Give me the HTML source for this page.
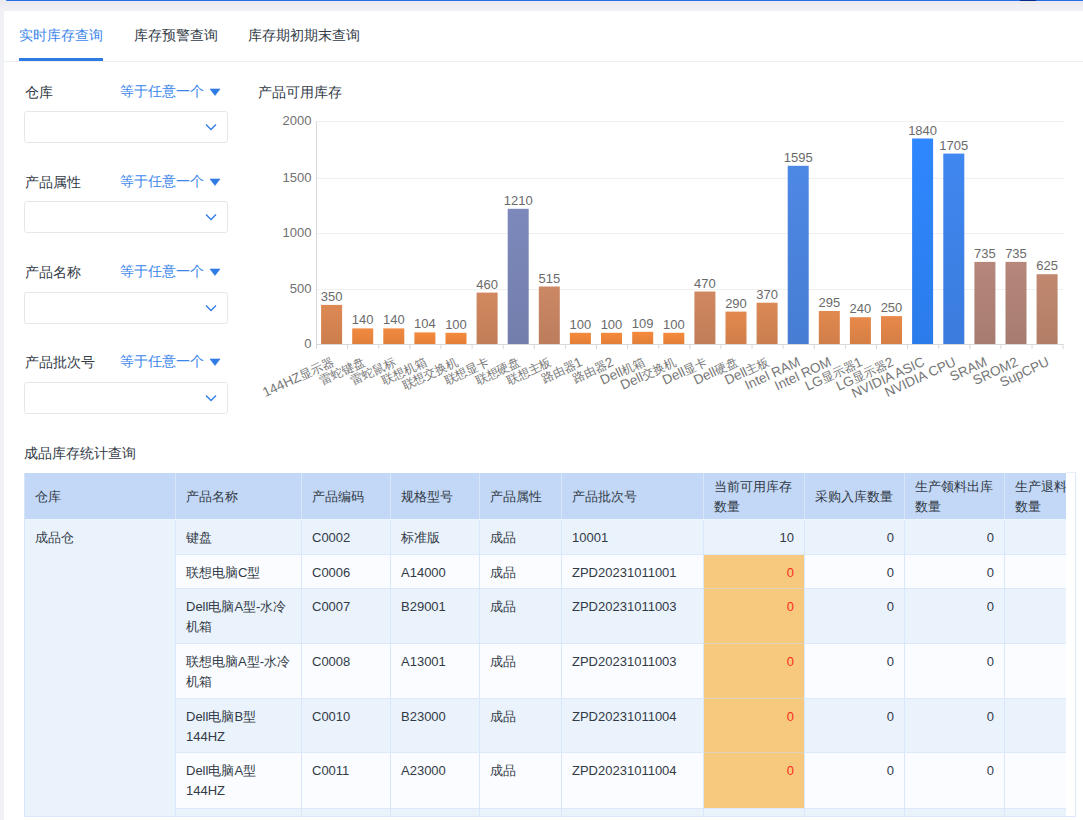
<!DOCTYPE html>
<html><head><meta charset="utf-8"><style>
html,body{margin:0;padding:0}
body{width:1083px;height:820px;overflow:hidden;position:relative;background:#f0f1f5;font-family:"Liberation Sans",sans-serif;}
.abs{position:absolute}
.tab{position:absolute;top:25px;font-size:14px;line-height:20px;color:#323a46;white-space:nowrap}
.lab{position:absolute;left:25px;font-size:14px;line-height:20px;color:#323a46;white-space:nowrap}
.op{position:absolute;left:120px;font-size:14px;line-height:20px;color:#3b86ea;white-space:nowrap}
.tri{position:absolute;left:209px}
.sel{position:absolute;left:24px;width:202px;height:30px;border:1px solid #e6e7ea;border-radius:3px;background:#fff}
.yl{font-size:13px;fill:#707070;font-family:"Liberation Sans",sans-serif}
.vl{font-size:13px;fill:#6a6a6a;font-family:"Liberation Sans",sans-serif}
.cj{font-size:12px}
.xl{font-size:13.5px;fill:#767676;font-family:"Liberation Sans",sans-serif}
.th{position:absolute;font-size:13px;line-height:20px;color:#323a46;white-space:nowrap}
.th2{position:absolute;font-size:13px;line-height:20px;color:#323a46;white-space:nowrap;overflow:hidden}
.td{position:absolute;font-size:13px;line-height:20px;color:#323a46;white-space:nowrap}
.num{text-align:right}
.red{color:#fb2c17}
</style></head><body>
<div class="abs" style="left:0;top:0;width:1083px;height:11px;background:linear-gradient(#e9e9ee,#f2f2f6)"></div>
<div class="abs" style="left:6px;top:0;width:1077px;height:1px;background:#2570e8;border-radius:0 0 0 2px"></div>
<div class="abs" style="left:1020px;top:0;width:16px;height:1px;background:#0a2a8a"></div>
<div class="abs" style="left:0;top:11px;width:4px;height:809px;background:#f0f1f5"></div>
<div class="abs" style="left:4px;top:11px;width:1079px;height:809px;background:#fff"></div>
<div class="tab" style="left:19px;color:#3b86ea">实时库存查询</div>
<div class="tab" style="left:134px">库存预警查询</div>
<div class="tab" style="left:248px">库存期初期末查询</div>
<div class="abs" style="left:4px;top:61px;width:1079px;height:1px;background:#eeeff3"></div>
<div class="abs" style="left:19px;top:58px;width:84px;height:3px;background:#2f7be6"></div>
<div class="lab" style="top:82px">仓库</div>
<div class="op" style="top:81px">等于任意一个</div><svg class="tri" style="top:88px" width="12" height="9"><path d="M1 1 L11 1 L6 7.5 Z" fill="#2f7be6" stroke="#2f7be6" stroke-width="0.6" stroke-linejoin="round"/></svg>
<div class="sel" style="top:111px"><svg width="12" height="8" style="position:absolute;left:180px;top:11px"><path d="M1 1.5 L6 6.5 L11 1.5" fill="none" stroke="#2f7be6" stroke-width="1.3"/></svg></div>
<div class="lab" style="top:172px">产品属性</div>
<div class="op" style="top:171px">等于任意一个</div><svg class="tri" style="top:178px" width="12" height="9"><path d="M1 1 L11 1 L6 7.5 Z" fill="#2f7be6" stroke="#2f7be6" stroke-width="0.6" stroke-linejoin="round"/></svg>
<div class="sel" style="top:201px"><svg width="12" height="8" style="position:absolute;left:180px;top:11px"><path d="M1 1.5 L6 6.5 L11 1.5" fill="none" stroke="#2f7be6" stroke-width="1.3"/></svg></div>
<div class="lab" style="top:262px">产品名称</div>
<div class="op" style="top:261px">等于任意一个</div><svg class="tri" style="top:268px" width="12" height="9"><path d="M1 1 L11 1 L6 7.5 Z" fill="#2f7be6" stroke="#2f7be6" stroke-width="0.6" stroke-linejoin="round"/></svg>
<div class="sel" style="top:292px"><svg width="12" height="8" style="position:absolute;left:180px;top:11px"><path d="M1 1.5 L6 6.5 L11 1.5" fill="none" stroke="#2f7be6" stroke-width="1.3"/></svg></div>
<div class="lab" style="top:352px">产品批次号</div>
<div class="op" style="top:351px">等于任意一个</div><svg class="tri" style="top:358px" width="12" height="9"><path d="M1 1 L11 1 L6 7.5 Z" fill="#2f7be6" stroke="#2f7be6" stroke-width="0.6" stroke-linejoin="round"/></svg>
<div class="sel" style="top:382px"><svg width="12" height="8" style="position:absolute;left:180px;top:11px"><path d="M1 1.5 L6 6.5 L11 1.5" fill="none" stroke="#2f7be6" stroke-width="1.3"/></svg></div>
<div class="lab" style="left:258px;top:82px">产品可用库存</div>
<svg width="1083" height="820" style="position:absolute;left:0;top:0">
<defs><linearGradient id="g0" x1="0" y1="0" x2="0" y2="1"><stop offset="0" stop-color="#dd8954"/><stop offset="1" stop-color="#cb7e4d"/></linearGradient><linearGradient id="g1" x1="0" y1="0" x2="0" y2="1"><stop offset="0" stop-color="#f28a40"/><stop offset="1" stop-color="#df7f3b"/></linearGradient><linearGradient id="g2" x1="0" y1="0" x2="0" y2="1"><stop offset="0" stop-color="#f28a40"/><stop offset="1" stop-color="#df7f3b"/></linearGradient><linearGradient id="g3" x1="0" y1="0" x2="0" y2="1"><stop offset="0" stop-color="#f68a3c"/><stop offset="1" stop-color="#e27f37"/></linearGradient><linearGradient id="g4" x1="0" y1="0" x2="0" y2="1"><stop offset="0" stop-color="#f68a3c"/><stop offset="1" stop-color="#e27f37"/></linearGradient><linearGradient id="g5" x1="0" y1="0" x2="0" y2="1"><stop offset="0" stop-color="#d2885f"/><stop offset="1" stop-color="#c17d57"/></linearGradient><linearGradient id="g6" x1="0" y1="0" x2="0" y2="1"><stop offset="0" stop-color="#7d89bb"/><stop offset="1" stop-color="#737eac"/></linearGradient><linearGradient id="g7" x1="0" y1="0" x2="0" y2="1"><stop offset="0" stop-color="#cc8865"/><stop offset="1" stop-color="#bc7d5d"/></linearGradient><linearGradient id="g8" x1="0" y1="0" x2="0" y2="1"><stop offset="0" stop-color="#f68a3c"/><stop offset="1" stop-color="#e27f37"/></linearGradient><linearGradient id="g9" x1="0" y1="0" x2="0" y2="1"><stop offset="0" stop-color="#f68a3c"/><stop offset="1" stop-color="#e27f37"/></linearGradient><linearGradient id="g10" x1="0" y1="0" x2="0" y2="1"><stop offset="0" stop-color="#f58a3d"/><stop offset="1" stop-color="#e17f38"/></linearGradient><linearGradient id="g11" x1="0" y1="0" x2="0" y2="1"><stop offset="0" stop-color="#f68a3c"/><stop offset="1" stop-color="#e27f37"/></linearGradient><linearGradient id="g12" x1="0" y1="0" x2="0" y2="1"><stop offset="0" stop-color="#d18860"/><stop offset="1" stop-color="#c07d58"/></linearGradient><linearGradient id="g13" x1="0" y1="0" x2="0" y2="1"><stop offset="0" stop-color="#e3894f"/><stop offset="1" stop-color="#d17e49"/></linearGradient><linearGradient id="g14" x1="0" y1="0" x2="0" y2="1"><stop offset="0" stop-color="#db8956"/><stop offset="1" stop-color="#c97e4f"/></linearGradient><linearGradient id="g15" x1="0" y1="0" x2="0" y2="1"><stop offset="0" stop-color="#4d88e5"/><stop offset="1" stop-color="#477dd3"/></linearGradient><linearGradient id="g16" x1="0" y1="0" x2="0" y2="1"><stop offset="0" stop-color="#e2894f"/><stop offset="1" stop-color="#d07e49"/></linearGradient><linearGradient id="g17" x1="0" y1="0" x2="0" y2="1"><stop offset="0" stop-color="#e8894a"/><stop offset="1" stop-color="#d57e44"/></linearGradient><linearGradient id="g18" x1="0" y1="0" x2="0" y2="1"><stop offset="0" stop-color="#e7894b"/><stop offset="1" stop-color="#d57e45"/></linearGradient><linearGradient id="g19" x1="0" y1="0" x2="0" y2="1"><stop offset="0" stop-color="#2f87ff"/><stop offset="1" stop-color="#2b7ceb"/></linearGradient><linearGradient id="g20" x1="0" y1="0" x2="0" y2="1"><stop offset="0" stop-color="#4087f0"/><stop offset="1" stop-color="#3b7cdd"/></linearGradient><linearGradient id="g21" x1="0" y1="0" x2="0" y2="1"><stop offset="0" stop-color="#b6877a"/><stop offset="1" stop-color="#a77c70"/></linearGradient><linearGradient id="g22" x1="0" y1="0" x2="0" y2="1"><stop offset="0" stop-color="#b6877a"/><stop offset="1" stop-color="#a77c70"/></linearGradient><linearGradient id="g23" x1="0" y1="0" x2="0" y2="1"><stop offset="0" stop-color="#c1886f"/><stop offset="1" stop-color="#b27d66"/></linearGradient></defs>
<text x="311.5" y="348.3" text-anchor="end" class="yl">0</text>
<line x1="316.5" y1="289.5" x2="1063.5" y2="289.5" stroke="#f0f0f0" stroke-width="1"/>
<text x="311.5" y="293.3" text-anchor="end" class="yl">500</text>
<line x1="316.5" y1="233.5" x2="1063.5" y2="233.5" stroke="#f0f0f0" stroke-width="1"/>
<text x="311.5" y="237.3" text-anchor="end" class="yl">1000</text>
<line x1="316.5" y1="178.5" x2="1063.5" y2="178.5" stroke="#f0f0f0" stroke-width="1"/>
<text x="311.5" y="182.3" text-anchor="end" class="yl">1500</text>
<line x1="316.5" y1="121.5" x2="1063.5" y2="121.5" stroke="#f0f0f0" stroke-width="1"/>
<text x="311.5" y="125.3" text-anchor="end" class="yl">2000</text>
<line x1="316.5" y1="121.5" x2="316.5" y2="344.5" stroke="#d8d8d8" stroke-width="1"/>
<line x1="316.5" y1="344.5" x2="1063.5" y2="344.5" stroke="#d8d8d8" stroke-width="1"/>
<line x1="316.5" y1="344.5" x2="316.5" y2="349.0" stroke="#d8d8d8" stroke-width="1"/>
<line x1="347.6" y1="344.5" x2="347.6" y2="349.0" stroke="#d8d8d8" stroke-width="1"/>
<line x1="378.7" y1="344.5" x2="378.7" y2="349.0" stroke="#d8d8d8" stroke-width="1"/>
<line x1="409.8" y1="344.5" x2="409.8" y2="349.0" stroke="#d8d8d8" stroke-width="1"/>
<line x1="440.9" y1="344.5" x2="440.9" y2="349.0" stroke="#d8d8d8" stroke-width="1"/>
<line x1="472.1" y1="344.5" x2="472.1" y2="349.0" stroke="#d8d8d8" stroke-width="1"/>
<line x1="503.2" y1="344.5" x2="503.2" y2="349.0" stroke="#d8d8d8" stroke-width="1"/>
<line x1="534.3" y1="344.5" x2="534.3" y2="349.0" stroke="#d8d8d8" stroke-width="1"/>
<line x1="565.4" y1="344.5" x2="565.4" y2="349.0" stroke="#d8d8d8" stroke-width="1"/>
<line x1="596.5" y1="344.5" x2="596.5" y2="349.0" stroke="#d8d8d8" stroke-width="1"/>
<line x1="627.6" y1="344.5" x2="627.6" y2="349.0" stroke="#d8d8d8" stroke-width="1"/>
<line x1="658.7" y1="344.5" x2="658.7" y2="349.0" stroke="#d8d8d8" stroke-width="1"/>
<line x1="689.8" y1="344.5" x2="689.8" y2="349.0" stroke="#d8d8d8" stroke-width="1"/>
<line x1="720.9" y1="344.5" x2="720.9" y2="349.0" stroke="#d8d8d8" stroke-width="1"/>
<line x1="752.0" y1="344.5" x2="752.0" y2="349.0" stroke="#d8d8d8" stroke-width="1"/>
<line x1="783.1" y1="344.5" x2="783.1" y2="349.0" stroke="#d8d8d8" stroke-width="1"/>
<line x1="814.3" y1="344.5" x2="814.3" y2="349.0" stroke="#d8d8d8" stroke-width="1"/>
<line x1="845.4" y1="344.5" x2="845.4" y2="349.0" stroke="#d8d8d8" stroke-width="1"/>
<line x1="876.5" y1="344.5" x2="876.5" y2="349.0" stroke="#d8d8d8" stroke-width="1"/>
<line x1="907.6" y1="344.5" x2="907.6" y2="349.0" stroke="#d8d8d8" stroke-width="1"/>
<line x1="938.7" y1="344.5" x2="938.7" y2="349.0" stroke="#d8d8d8" stroke-width="1"/>
<line x1="969.8" y1="344.5" x2="969.8" y2="349.0" stroke="#d8d8d8" stroke-width="1"/>
<line x1="1000.9" y1="344.5" x2="1000.9" y2="349.0" stroke="#d8d8d8" stroke-width="1"/>
<line x1="1032.0" y1="344.5" x2="1032.0" y2="349.0" stroke="#d8d8d8" stroke-width="1"/>
<line x1="1063.1" y1="344.5" x2="1063.1" y2="349.0" stroke="#d8d8d8" stroke-width="1"/>
<rect x="321.1" y="304.9" width="21" height="39.1" fill="url(#g0)"/>
<text x="331.6" y="300.9" text-anchor="middle" class="vl">350</text>
<text x="0" y="0" text-anchor="end" class="xl" transform="translate(334.6,365) rotate(-25)">144HZ<tspan class="cj">显示器</tspan></text>
<rect x="352.2" y="328.4" width="21" height="15.6" fill="url(#g1)"/>
<text x="362.7" y="324.4" text-anchor="middle" class="vl">140</text>
<text x="0" y="0" text-anchor="end" class="xl" transform="translate(365.7,365) rotate(-25)"><tspan class="cj">雷蛇键盘</tspan></text>
<rect x="383.3" y="328.4" width="21" height="15.6" fill="url(#g2)"/>
<text x="393.8" y="324.4" text-anchor="middle" class="vl">140</text>
<text x="0" y="0" text-anchor="end" class="xl" transform="translate(396.8,365) rotate(-25)"><tspan class="cj">雷蛇鼠标</tspan></text>
<rect x="414.4" y="332.4" width="21" height="11.6" fill="url(#g3)"/>
<text x="424.9" y="328.4" text-anchor="middle" class="vl">104</text>
<text x="0" y="0" text-anchor="end" class="xl" transform="translate(427.9,365) rotate(-25)"><tspan class="cj">联想机箱</tspan></text>
<rect x="445.5" y="332.8" width="21" height="11.2" fill="url(#g4)"/>
<text x="456.0" y="328.8" text-anchor="middle" class="vl">100</text>
<text x="0" y="0" text-anchor="end" class="xl" transform="translate(459.0,365) rotate(-25)"><tspan class="cj">联想交换机</tspan></text>
<rect x="476.6" y="292.6" width="21" height="51.4" fill="url(#g5)"/>
<text x="487.1" y="288.6" text-anchor="middle" class="vl">460</text>
<text x="0" y="0" text-anchor="end" class="xl" transform="translate(490.1,365) rotate(-25)"><tspan class="cj">联想显卡</tspan></text>
<rect x="507.7" y="208.8" width="21" height="135.2" fill="url(#g6)"/>
<text x="518.2" y="204.8" text-anchor="middle" class="vl">1210</text>
<text x="0" y="0" text-anchor="end" class="xl" transform="translate(521.2,365) rotate(-25)"><tspan class="cj">联想硬盘</tspan></text>
<rect x="538.8" y="286.5" width="21" height="57.5" fill="url(#g7)"/>
<text x="549.3" y="282.5" text-anchor="middle" class="vl">515</text>
<text x="0" y="0" text-anchor="end" class="xl" transform="translate(552.3,365) rotate(-25)"><tspan class="cj">联想主板</tspan></text>
<rect x="569.9" y="332.8" width="21" height="11.2" fill="url(#g8)"/>
<text x="580.4" y="328.8" text-anchor="middle" class="vl">100</text>
<text x="0" y="0" text-anchor="end" class="xl" transform="translate(583.4,365) rotate(-25)"><tspan class="cj">路由器</tspan>1</text>
<rect x="601.0" y="332.8" width="21" height="11.2" fill="url(#g9)"/>
<text x="611.5" y="328.8" text-anchor="middle" class="vl">100</text>
<text x="0" y="0" text-anchor="end" class="xl" transform="translate(614.5,365) rotate(-25)"><tspan class="cj">路由器</tspan>2</text>
<rect x="632.2" y="331.8" width="21" height="12.2" fill="url(#g10)"/>
<text x="642.7" y="327.8" text-anchor="middle" class="vl">109</text>
<text x="0" y="0" text-anchor="end" class="xl" transform="translate(645.7,365) rotate(-25)">Dell<tspan class="cj">机箱</tspan></text>
<rect x="663.3" y="332.8" width="21" height="11.2" fill="url(#g11)"/>
<text x="673.8" y="328.8" text-anchor="middle" class="vl">100</text>
<text x="0" y="0" text-anchor="end" class="xl" transform="translate(676.8,365) rotate(-25)">Dell<tspan class="cj">交换机</tspan></text>
<rect x="694.4" y="291.5" width="21" height="52.5" fill="url(#g12)"/>
<text x="704.9" y="287.5" text-anchor="middle" class="vl">470</text>
<text x="0" y="0" text-anchor="end" class="xl" transform="translate(707.9,365) rotate(-25)">Dell<tspan class="cj">显卡</tspan></text>
<rect x="725.5" y="311.6" width="21" height="32.4" fill="url(#g13)"/>
<text x="736.0" y="307.6" text-anchor="middle" class="vl">290</text>
<text x="0" y="0" text-anchor="end" class="xl" transform="translate(739.0,365) rotate(-25)">Dell<tspan class="cj">硬盘</tspan></text>
<rect x="756.6" y="302.7" width="21" height="41.3" fill="url(#g14)"/>
<text x="767.1" y="298.7" text-anchor="middle" class="vl">370</text>
<text x="0" y="0" text-anchor="end" class="xl" transform="translate(770.1,365) rotate(-25)">Dell<tspan class="cj">主板</tspan></text>
<rect x="787.7" y="165.8" width="21" height="178.2" fill="url(#g15)"/>
<text x="798.2" y="161.8" text-anchor="middle" class="vl">1595</text>
<text x="0" y="0" text-anchor="end" class="xl" transform="translate(801.2,365) rotate(-25)">Intel RAM</text>
<rect x="818.8" y="311.0" width="21" height="33.0" fill="url(#g16)"/>
<text x="829.3" y="307.0" text-anchor="middle" class="vl">295</text>
<text x="0" y="0" text-anchor="end" class="xl" transform="translate(832.3,365) rotate(-25)">Intel ROM</text>
<rect x="849.9" y="317.2" width="21" height="26.8" fill="url(#g17)"/>
<text x="860.4" y="313.2" text-anchor="middle" class="vl">240</text>
<text x="0" y="0" text-anchor="end" class="xl" transform="translate(863.4,365) rotate(-25)">LG<tspan class="cj">显示器</tspan>1</text>
<rect x="881.0" y="316.1" width="21" height="27.9" fill="url(#g18)"/>
<text x="891.5" y="312.1" text-anchor="middle" class="vl">250</text>
<text x="0" y="0" text-anchor="end" class="xl" transform="translate(894.5,365) rotate(-25)">LG<tspan class="cj">显示器</tspan>2</text>
<rect x="912.1" y="138.5" width="21" height="205.5" fill="url(#g19)"/>
<text x="922.6" y="134.5" text-anchor="middle" class="vl">1840</text>
<text x="0" y="0" text-anchor="end" class="xl" transform="translate(925.6,365) rotate(-25)">NVIDIA ASIC</text>
<rect x="943.3" y="153.6" width="21" height="190.4" fill="url(#g20)"/>
<text x="953.8" y="149.6" text-anchor="middle" class="vl">1705</text>
<text x="0" y="0" text-anchor="end" class="xl" transform="translate(956.8,365) rotate(-25)">NVIDIA CPU</text>
<rect x="974.4" y="261.9" width="21" height="82.1" fill="url(#g21)"/>
<text x="984.9" y="257.9" text-anchor="middle" class="vl">735</text>
<text x="0" y="0" text-anchor="end" class="xl" transform="translate(987.9,365) rotate(-25)">SRAM</text>
<rect x="1005.5" y="261.9" width="21" height="82.1" fill="url(#g22)"/>
<text x="1016.0" y="257.9" text-anchor="middle" class="vl">735</text>
<text x="0" y="0" text-anchor="end" class="xl" transform="translate(1019.0,365) rotate(-25)">SROM2</text>
<rect x="1036.6" y="274.2" width="21" height="69.8" fill="url(#g23)"/>
<text x="1047.1" y="270.2" text-anchor="middle" class="vl">625</text>
<text x="0" y="0" text-anchor="end" class="xl" transform="translate(1050.1,365) rotate(-25)">SupCPU</text>
</svg>
<div class="lab" style="left:24px;top:443px">成品库存统计查询</div>
<div style="position:absolute;left:24px;top:473px;width:1042px;height:46px;background:#c3d8f6"></div>
<div style="position:absolute;left:24px;top:519px;width:1042px;height:1px;background:#eef4fd"></div>
<div style="position:absolute;left:175px;top:520px;width:891px;height:34px;background:#eaf2fc"></div>
<div style="position:absolute;left:175px;top:555px;width:891px;height:33px;background:#fafcff"></div>
<div style="position:absolute;left:175px;top:589px;width:891px;height:54px;background:#eaf2fc"></div>
<div style="position:absolute;left:175px;top:644px;width:891px;height:54px;background:#fafcff"></div>
<div style="position:absolute;left:175px;top:699px;width:891px;height:53px;background:#eaf2fc"></div>
<div style="position:absolute;left:175px;top:753px;width:891px;height:55px;background:#fafcff"></div>
<div style="position:absolute;left:175px;top:809px;width:891px;height:7px;background:#eaf2fc"></div>
<div style="position:absolute;left:24px;top:520px;width:151px;height:296px;background:#eaf2fc"></div>
<div style="position:absolute;left:175px;top:520px;width:1px;height:296px;background:#d9e7fa"></div>
<div style="position:absolute;left:301px;top:520px;width:1px;height:296px;background:#d9e7fa"></div>
<div style="position:absolute;left:390px;top:520px;width:1px;height:296px;background:#d9e7fa"></div>
<div style="position:absolute;left:479px;top:520px;width:1px;height:296px;background:#d9e7fa"></div>
<div style="position:absolute;left:561px;top:520px;width:1px;height:296px;background:#d9e7fa"></div>
<div style="position:absolute;left:703px;top:520px;width:1px;height:296px;background:#d9e7fa"></div>
<div style="position:absolute;left:804px;top:520px;width:1px;height:296px;background:#d9e7fa"></div>
<div style="position:absolute;left:904px;top:520px;width:1px;height:296px;background:#d9e7fa"></div>
<div style="position:absolute;left:1004px;top:520px;width:1px;height:296px;background:#d9e7fa"></div>
<div style="position:absolute;left:175px;top:473px;width:1px;height:46px;background:#d8e6f9"></div>
<div style="position:absolute;left:301px;top:473px;width:1px;height:46px;background:#d8e6f9"></div>
<div style="position:absolute;left:390px;top:473px;width:1px;height:46px;background:#d8e6f9"></div>
<div style="position:absolute;left:479px;top:473px;width:1px;height:46px;background:#d8e6f9"></div>
<div style="position:absolute;left:561px;top:473px;width:1px;height:46px;background:#d8e6f9"></div>
<div style="position:absolute;left:703px;top:473px;width:1px;height:46px;background:#d8e6f9"></div>
<div style="position:absolute;left:804px;top:473px;width:1px;height:46px;background:#d8e6f9"></div>
<div style="position:absolute;left:904px;top:473px;width:1px;height:46px;background:#d8e6f9"></div>
<div style="position:absolute;left:1004px;top:473px;width:1px;height:46px;background:#d8e6f9"></div>
<div style="position:absolute;left:175px;top:554px;width:891px;height:1px;background:#dce9fa"></div>
<div style="position:absolute;left:175px;top:588px;width:891px;height:1px;background:#dce9fa"></div>
<div style="position:absolute;left:175px;top:643px;width:891px;height:1px;background:#dce9fa"></div>
<div style="position:absolute;left:175px;top:698px;width:891px;height:1px;background:#dce9fa"></div>
<div style="position:absolute;left:175px;top:752px;width:891px;height:1px;background:#dce9fa"></div>
<div style="position:absolute;left:175px;top:808px;width:891px;height:1px;background:#dce9fa"></div>
<div style="position:absolute;left:704px;top:555px;width:100px;height:253px;background:#f7c97f"></div>
<div style="position:absolute;left:704px;top:588px;width:100px;height:1px;background:#dfd2bb"></div>
<div style="position:absolute;left:704px;top:643px;width:100px;height:1px;background:#dfd2bb"></div>
<div style="position:absolute;left:704px;top:698px;width:100px;height:1px;background:#dfd2bb"></div>
<div style="position:absolute;left:704px;top:752px;width:100px;height:1px;background:#dfd2bb"></div>
<div style="position:absolute;left:24px;top:816px;width:1052px;height:1px;background:#dce9fa"></div>
<div style="position:absolute;left:24px;top:473px;width:1px;height:343px;background:#d6e4f7"></div>
<div style="position:absolute;left:1075px;top:472px;width:1px;height:345px;background:#dce9fa"></div>
<div style="position:absolute;left:1066px;top:472px;width:9px;height:1px;background:#e6effb"></div>
<div class="th" style="left:35px;top:487px">仓库</div>
<div class="th" style="left:186px;top:487px">产品名称</div>
<div class="th" style="left:312px;top:487px">产品编码</div>
<div class="th" style="left:401px;top:487px">规格型号</div>
<div class="th" style="left:490px;top:487px">产品属性</div>
<div class="th" style="left:572px;top:487px">产品批次号</div>
<div class="th2" style="left:714px;top:477px;width:90px">当前可用库存<br>数量</div>
<div class="th" style="left:815px;top:487px">采购入库数量</div>
<div class="th2" style="left:915px;top:477px;width:89px">生产领料出库<br>数量</div>
<div class="th2" style="left:1015px;top:477px;width:51px">生产退料<br>数量</div>
<div class="td" style="left:35px;top:528px">成品仓</div>
<div class="td" style="left:186px;top:528px">键盘</div>
<div class="td" style="left:312px;top:528px">C0002</div>
<div class="td" style="left:401px;top:528px">标准版</div>
<div class="td" style="left:490px;top:528px">成品</div>
<div class="td" style="left:572px;top:528px">10001</div>
<div class="td num" style="left:704px;width:90px;top:528px">10</div>
<div class="td num" style="left:804px;width:90px;top:528px">0</div>
<div class="td num" style="left:904px;width:90px;top:528px">0</div>
<div class="td" style="left:186px;top:563px">联想电脑C型</div>
<div class="td" style="left:312px;top:563px">C0006</div>
<div class="td" style="left:401px;top:563px">A14000</div>
<div class="td" style="left:490px;top:563px">成品</div>
<div class="td" style="left:572px;top:563px">ZPD20231011001</div>
<div class="td num red" style="left:704px;width:90px;top:563px">0</div>
<div class="td num" style="left:804px;width:90px;top:563px">0</div>
<div class="td num" style="left:904px;width:90px;top:563px">0</div>
<div class="td" style="left:186px;top:597px">Dell电脑A型-水冷<br>机箱</div>
<div class="td" style="left:312px;top:597px">C0007</div>
<div class="td" style="left:401px;top:597px">B29001</div>
<div class="td" style="left:490px;top:597px">成品</div>
<div class="td" style="left:572px;top:597px">ZPD20231011003</div>
<div class="td num red" style="left:704px;width:90px;top:597px">0</div>
<div class="td num" style="left:804px;width:90px;top:597px">0</div>
<div class="td num" style="left:904px;width:90px;top:597px">0</div>
<div class="td" style="left:186px;top:652px">联想电脑A型-水冷<br>机箱</div>
<div class="td" style="left:312px;top:652px">C0008</div>
<div class="td" style="left:401px;top:652px">A13001</div>
<div class="td" style="left:490px;top:652px">成品</div>
<div class="td" style="left:572px;top:652px">ZPD20231011003</div>
<div class="td num red" style="left:704px;width:90px;top:652px">0</div>
<div class="td num" style="left:804px;width:90px;top:652px">0</div>
<div class="td num" style="left:904px;width:90px;top:652px">0</div>
<div class="td" style="left:186px;top:707px">Dell电脑B型<br>144HZ</div>
<div class="td" style="left:312px;top:707px">C0010</div>
<div class="td" style="left:401px;top:707px">B23000</div>
<div class="td" style="left:490px;top:707px">成品</div>
<div class="td" style="left:572px;top:707px">ZPD20231011004</div>
<div class="td num red" style="left:704px;width:90px;top:707px">0</div>
<div class="td num" style="left:804px;width:90px;top:707px">0</div>
<div class="td num" style="left:904px;width:90px;top:707px">0</div>
<div class="td" style="left:186px;top:761px">Dell电脑A型<br>144HZ</div>
<div class="td" style="left:312px;top:761px">C0011</div>
<div class="td" style="left:401px;top:761px">A23000</div>
<div class="td" style="left:490px;top:761px">成品</div>
<div class="td" style="left:572px;top:761px">ZPD20231011004</div>
<div class="td num red" style="left:704px;width:90px;top:761px">0</div>
<div class="td num" style="left:804px;width:90px;top:761px">0</div>
<div class="td num" style="left:904px;width:90px;top:761px">0</div>
</body></html>
